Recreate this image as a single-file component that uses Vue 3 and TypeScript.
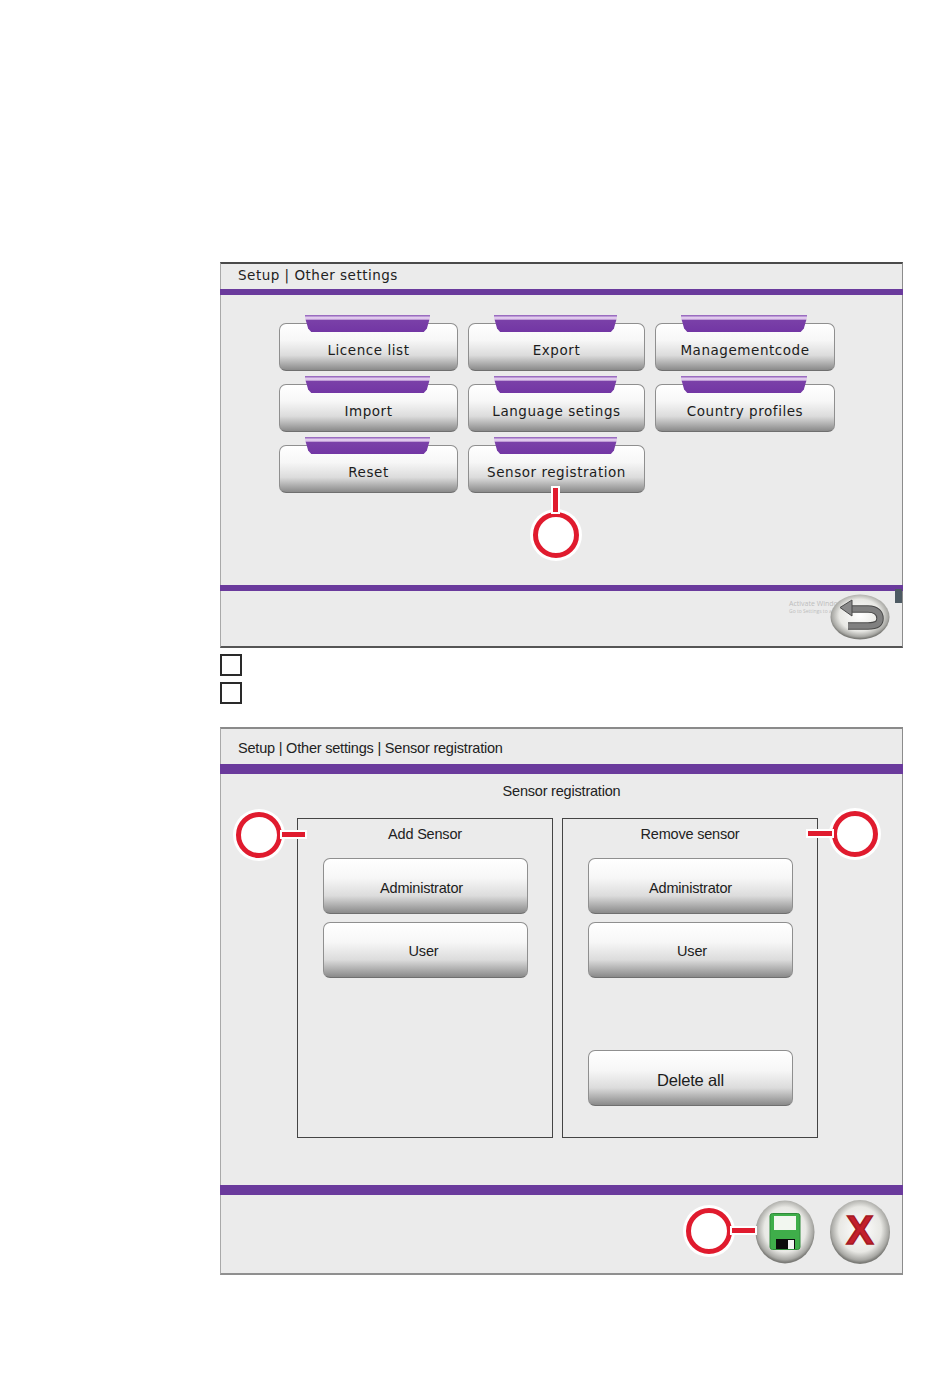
<script setup lang="ts">
const menu: string[] = [
  'Licence list', 'Export', 'Managementcode',
  'Import', 'Language setings', 'Country profiles',
  'Reset', 'Sensor registration'
]
</script>

<template>
  <main class="page">
    <section class="panel first">
      <header class="head">Setup | Other settings</header>
      <div class="bar"></div>
      <div class="body">
        <div class="menu">
          <button v-for="m in menu" :key="m" class="btn tabbed">{{ m }}</button>
        </div>
        <span class="callout c-menu"><i class="ring"></i><i class="lead"></i></span>
      </div>
      <div class="bar"></div>
      <footer class="foot">
        <div class="watermark"><span>Activate Windows</span><small>Go to Settings to activate</small></div>
        <i class="notch"></i>
        <svg class="back" width="60" height="46" viewBox="0 0 60 46">
          <defs>
            <radialGradient id="gb" cx="50%" cy="46%" r="52%">
              <stop offset="0" stop-color="#ffffff" />
              <stop offset="0.68" stop-color="#e8e8e4" />
              <stop offset="0.92" stop-color="#a8a8a4" />
              <stop offset="1" stop-color="#7c7c78" />
            </radialGradient>
          </defs>
          <ellipse cx="30" cy="23" rx="29.500" ry="22.500" fill="url(#gb)" />
          <path d="M18 15H38C47 15 50 20 50 24.500C50 30 46 32 38 32H18" fill="none" stroke="#4a4a4a" stroke-width="7.500" />
          <path d="M18 15H38C47 15 50 20 50 24.500C50 30 46 32 38 32H18" fill="none" stroke="#808080" stroke-width="5.500" />
          <path d="M10 13.500L22 6V22Z" fill="#8a8a8a" stroke="#4a4a4a" />
        </svg>
      </footer>
    </section>

    <div class="check"></div>
    <div class="check"></div>

    <section class="panel last">
      <header class="head">Setup | Other settings | Sensor registration</header>
      <div class="bar"></div>
      <div class="body">
        <div class="subtitle">Sensor registration</div>
        <div class="boxes">
          <div class="box">
            <div class="box-title">Add Sensor</div>
            <button class="btn large nudge">Administrator</button>
            <button class="btn large nudge-small second">User</button>
          </div>
          <div class="box">
            <div class="box-title">Remove sensor</div>
            <button class="btn large">Administrator</button>
            <button class="btn large nudge-right second">User</button>
            <button class="btn large delete">Delete all</button>
          </div>
        </div>
        <span class="callout c-add"><i class="ring"></i><i class="lead"></i></span>
        <span class="callout c-remove"><i class="ring"></i><i class="lead"></i></span>
      </div>
      <div class="bar"></div>
      <footer class="foot">
        <span class="callout c-save"><i class="ring"></i><i class="lead"></i></span>
        <svg class="round" width="60" height="64" viewBox="0 0 60 64">
          <defs>
            <radialGradient id="gs" cx="50%" cy="46%" r="52%">
              <stop offset="0" stop-color="#ffffff" />
              <stop offset="0.68" stop-color="#e8e8e4" />
              <stop offset="0.92" stop-color="#a8a8a4" />
              <stop offset="1" stop-color="#7c7c78" />
            </radialGradient>
          </defs>
          <ellipse cx="30" cy="32" rx="29.500" ry="31.500" fill="url(#gs)" />
          <rect x="15" y="13.500" width="30" height="36" rx="2.500" fill="#3fae4a" stroke="#2f8a3a" />
          <rect x="19" y="16" width="22" height="14" fill="#f2f7f0" />
          <rect x="21" y="39" width="19" height="10" fill="#0c0c0c" />
          <rect x="33" y="40" width="6" height="9" fill="#f4f4f4" />
        </svg>
        <div class="close"><span>X</span></div>
      </footer>
    </section>
  </main>
</template>

<style>
html, body { margin: 0; background: #fff; }
</style>

<style scoped>
.page {
  width: 950px;
  height: 1378px;
  box-sizing: border-box;
  padding: 262px 47px 0 220px;
  font-family: "Liberation Sans", Arial, sans-serif;
  color: #222;
  overflow: hidden;
}
.panel {
  position: relative;
  display: flex;
  flex-direction: column;
  box-sizing: border-box;
  background: #ebebeb;
  border-left: 1px solid #a9a9a9;
  border-right: 1px solid #8c8c8c;
}
.first { height: 386px; border-top: 2px solid #4a4a4a; border-bottom: 2px solid #555; }
.last { height: 548px; margin-top: 23px; border-top: 2px solid #8a8a8a; border-bottom: 2px solid #8f8f8f; }
.head { padding-left: 17px; box-sizing: border-box; }
.first .head { height: 25px; font-family: "DejaVu Sans", sans-serif; font-size: 13.500px; letter-spacing: 0.5px; line-height: 23px; }
.last .head { height: 35px; font-size: 14.500px; letter-spacing: -0.2px; line-height: 38px; }
.bar { flex: none; margin: 0 -1px; background: #6a3a9c; }
.first .bar { height: 6px; }
.last .bar { height: 10px; }
.body { position: relative; flex: 1; }
.foot { position: relative; flex: none; display: flex; justify-content: flex-end; }
.first .foot { height: 55px; }
.last .foot { height: 78px; align-items: flex-start; padding: 5px 12px 0 0; gap: 15px; box-sizing: border-box; }

.menu {
  display: grid;
  grid-template-columns: 179px 177px 180px;
  grid-auto-rows: 48px;
  column-gap: 10px;
  row-gap: 13px;
  padding: 28px 0 0 58px;
}
.btn {
  position: relative;
  display: block;
  box-sizing: border-box;
  margin: 0;
  padding: 5px 0 0;
  border: 1px solid #8f8f8f;
  border-bottom-color: #6f6f6f;
  border-radius: 7px;
  background: linear-gradient(#ffffff 0, #f7f7f7 35%, #dcdcdc 68%, #8a8a8a 100%);
  font-family: inherit;
  color: #1c1c1c;
  text-align: center;
}
.tabbed { font-family: "DejaVu Sans", sans-serif; font-size: 13.500px; letter-spacing: 0.55px; }
.tabbed::before {
  content: "";
  position: absolute;
  top: -9px;
  left: 25px;
  right: 27px;
  height: 17px;
  background: linear-gradient(#9a6cc0 0, #9a6cc0 6%, #e2cdee 12%, #dcc4ea 24%, #7a40a8 32%, #7236a4 100%);
  clip-path: polygon(0 0, 100% 0, 100% 15%, 97.500% 80%, 95% 100%, 5% 100%, 2.500% 80%, 0 15%);
}

.subtitle { text-align: center; font-size: 14.500px; letter-spacing: -0.2px; line-height: 34px; height: 44px; }
.boxes { display: flex; gap: 9px; padding-left: 76px; }
.box {
  width: 256px;
  height: 320px;
  box-sizing: border-box;
  border: 1px solid #444;
  padding: 0 25px;
  display: flex;
  flex-direction: column;
  align-items: flex-start;
}
.box-title { width: 100%; text-align: center; font-size: 14.500px; letter-spacing: -0.2px; line-height: 30px; height: 39px; }
.large {
  width: 205px;
  height: 56px;
  flex: none;
  font-size: 14.500px;
  letter-spacing: -0.2px;
  padding-top: 4px;
  margin-bottom: 8px;
}
.large.second { padding-top: 2px; }
.nudge { padding-right: 8px; }
.nudge-small { padding-right: 4px; }
.nudge-right { padding-left: 3px; }
.delete { margin-top: 64px; font-size: 16.500px; }

.callout { position: absolute; display: block; width: 46px; height: 46px; }
.ring {
  position: absolute;
  box-sizing: border-box;
  width: 46px;
  height: 46px;
  border: 5px solid #e01b2e;
  border-radius: 50%;
  background: #fff;
  box-shadow: 0 0 0 3px #fff;
}
.lead { position: absolute; background: #e01b2e; box-shadow: 0 0 0 2px #fff; }
.c-menu { left: 312px; top: 217px; }
.c-menu .lead { left: 20px; top: -24px; width: 5px; height: 24px; }
.c-add { left: 15px; top: 38px; }
.c-add .lead { left: 46px; top: 20px; width: 23px; height: 5px; }
.c-remove { left: 611px; top: 37px; }
.c-remove .lead { left: -24px; top: 20px; width: 24px; height: 5px; }
.c-save { left: 465px; top: 13px; }
.c-save .lead { left: 46px; top: 20px; width: 23px; height: 5px; }

.watermark {
  position: absolute;
  left: 568px;
  top: 9px;
  display: flex;
  flex-direction: column;
  font-family: "Open Sans", sans-serif;
  color: #bdbdbd;
  font-size: 7px;
  line-height: 8px;
  white-space: nowrap;
}
.watermark small { font-size: 5px; line-height: 7px; }
.notch { position: absolute; right: 0; top: -2px; width: 7px; height: 14px; background: #4d5a63; }
.back { position: absolute; left: 609px; top: 3px; }
.round { flex: none; }
.close {
  flex: none;
  width: 60px;
  height: 64px;
  padding-bottom: 4px;
  box-sizing: border-box;
  display: flex;
  align-items: center;
  justify-content: center;
  border-radius: 50%;
  background: radial-gradient(ellipse 52% 52% at 50% 46%, #ffffff 0, #e8e8e4 68%, #a8a8a4 92%, #7c7c78 100%);
}
.close span {
  font-family: "Liberation Sans", sans-serif;
  font-weight: 700;
  font-size: 41px;
  line-height: 1;
  color: #c4202c;
  -webkit-text-stroke: 1.500px #a51a24;
}
.check {
  width: 22px;
  height: 22px;
  box-sizing: border-box;
  border: 2px solid #2a2a2a;
  margin-top: 6px;
}
</style>
